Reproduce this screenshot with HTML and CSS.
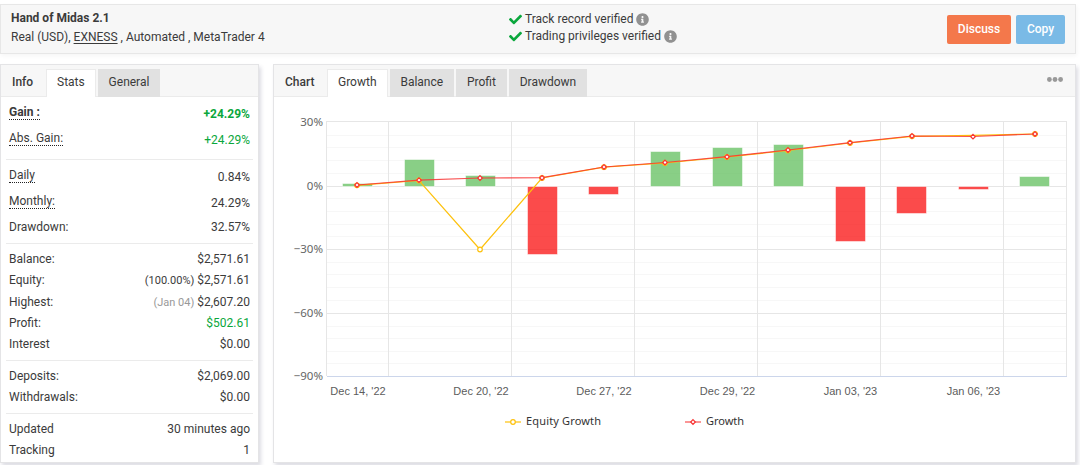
FILE: index.html
```html
<!DOCTYPE html>
<html lang="en">
<head>
<meta charset="utf-8">
<title>Hand of Midas 2.1</title>
<link rel="stylesheet" href="styles.css">
</head>
<body>
<svg class="defs" width="0" height="0">
  <symbol id="check" viewBox="0 0 512 512"><path d="M173.898 439.404l-166.4-166.4c-9.997-9.997-9.997-26.206 0-36.204l36.203-36.204c9.997-9.998 26.207-9.998 36.204 0L192 312.69 432.095 72.596c9.997-9.997 26.207-9.997 36.204 0l36.203 36.204c9.997 9.997 9.997 26.206 0 36.204l-294.4 294.401c-9.998 9.997-26.207 9.997-36.204-.001z"/></symbol>
  <symbol id="info" viewBox="0 0 512 512"><path d="M256 8C119.043 8 8 119.083 8 256c0 136.997 111.043 248 248 248s248-111.003 248-248C504 119.083 392.957 8 256 8zm0 110c23.196 0 42 18.804 42 42s-18.804 42-42 42-42-18.804-42-42 18.804-42 42-42zm56 254c0 6.627-5.373 12-12 12h-88c-6.627 0-12-5.373-12-12v-24c0-6.627 5.373-12 12-12h12v-64h-12c-6.627 0-12-5.373-12-12v-24c0-6.627 5.373-12 12-12h64c6.627 0 12 5.373 12 12v100h12c6.627 0 12 5.373 12 12v24z"/></symbol>
</svg>
<header class="account">
  <div class="account-info">
    <h1 class="account-name">Hand of Midas 2.1</h1>
    <p class="account-meta">Real (USD), <a class="broker">EXNESS</a> , Automated , MetaTrader 4</p>
  </div>
  <ul class="verified">
    <li class="verified-item"><svg class="check"><use href="#check"/></svg><span>Track record verified</span><svg class="info"><use href="#info"/></svg></li>
    <li class="verified-item"><svg class="check"><use href="#check"/></svg><span>Trading privileges verified</span><svg class="info"><use href="#info"/></svg></li>
  </ul>
  <div class="actions">
    <button class="btn btn-discuss">Discuss</button>
    <button class="btn btn-copy">Copy</button>
  </div>
</header>
<main class="columns">
  <section class="panel stats-panel">
    <nav class="panel-head">
      <h2 class="panel-title">Info</h2>
      <a class="tab tab-active">Stats</a>
      <a class="tab">General</a>
    </nav>
    <div class="stats">
      <div class="group group-gain">
        <div class="row strong"><span class="hint">Gain :</span><span class="green">+24.29%</span></div>
        <div class="row"><span class="hint">Abs. Gain:</span><span class="green">+24.29%</span></div>
      </div>
      <div class="group group-rate">
        <div class="row"><span class="hint">Daily</span><span>0.84%</span></div>
        <div class="row"><span class="hint">Monthly:</span><span>24.29%</span></div>
        <div class="row row-short"><span>Drawdown:</span><span>32.57%</span></div>
      </div>
      <div class="group">
        <div class="row"><span>Balance:</span><span>$2,571.61</span></div>
        <div class="row"><span>Equity:</span><span><small class="note">(100.00%)</small> $2,571.61</span></div>
        <div class="row"><span>Highest:</span><span><small class="note muted">(Jan 04)</small> $2,607.20</span></div>
        <div class="row"><span>Profit:</span><span class="green">$502.61</span></div>
        <div class="row"><span>Interest</span><span>$0.00</span></div>
      </div>
      <div class="group group-pair">
        <div class="row"><span>Deposits:</span><span>$2,069.00</span></div>
        <div class="row"><span>Withdrawals:</span><span>$0.00</span></div>
      </div>
      <div class="group group-pair">
        <div class="row"><span>Updated</span><span>30 minutes ago</span></div>
        <div class="row"><span>Tracking</span><span>1</span></div>
      </div>
    </div>
  </section>
  <section class="panel chart-panel">
    <nav class="panel-head">
      <h2 class="panel-title">Chart</h2>
      <a class="tab tab-active">Growth</a>
      <a class="tab">Balance</a>
      <a class="tab">Profit</a>
      <a class="tab">Drawdown</a>
      <svg class="more" viewBox="0 0 16 5"><circle cx="2.4" cy="2.5" r="2.4"/><circle cx="8" cy="2.5" r="2.4"/><circle cx="13.6" cy="2.5" r="2.4"/></svg>
    </nav>
    <svg class="chart" viewBox="274 97 801 365">
      <path class="grid-minor" d="M327 135.5H1066M327 147.5H1066M327 160.5H1066M327 173.5H1066M327 198.5H1066M327 211.5H1066M327 224.5H1066M327 236.5H1066M327 262.5H1066M327 274.5H1066M327 287.5H1066M327 300.5H1066M327 326.5H1066M327 338.5H1066M327 351.5H1066M327 363.5H1066"/>
      <path class="grid" d="M327 121.5H1066M327 186.5H1066M327 249.5H1066M327 313.5H1066M326.500 121V376M388.500 121V376M511.500 121V376M634.500 121V376M757.500 121V376M880.500 121V376M1003.500 121V376M1066.500 121V376"/>
      <path class="axis" d="M327 376.500H1067"/>
      <g class="bar-up">
        <rect x="342.500" y="183.500" width="30" height="3"/>
        <rect x="404.500" y="159.500" width="30" height="27"/>
        <rect x="465.500" y="175.500" width="30" height="11"/>
        <rect x="650.500" y="151.500" width="30" height="35"/>
        <rect x="712.500" y="147.500" width="30" height="39"/>
        <rect x="773.500" y="144.500" width="30" height="42"/>
        <rect x="1019.500" y="176.500" width="30" height="10"/>
      </g>
      <g class="bar-down">
        <rect x="527.500" y="186.500" width="30" height="68"/>
        <rect x="588.500" y="186.500" width="30" height="8"/>
        <rect x="835.500" y="186.500" width="30" height="55"/>
        <rect x="896.500" y="186.500" width="30" height="27"/>
        <rect x="958.500" y="186.500" width="30" height="3"/>
      </g>
      <polyline class="line line-equity" points="357,185.300 419,180.500 480,249.500 542,178 604,167.200 665,163 727,157 788,150.500 850,143 912,136.300 973,135.300 1035,134"/>
      <g class="dot-equity">
        <circle cx="357" cy="185.300" r="2.3"/><circle cx="419" cy="180.500" r="2.3"/><circle cx="480" cy="249.500" r="2.3"/><circle cx="542" cy="178" r="2.3"/><circle cx="604" cy="167.200" r="2.3"/><circle cx="665" cy="163" r="2.3"/><circle cx="727" cy="157" r="2.3"/><circle cx="788" cy="150.500" r="2.3"/><circle cx="850" cy="143" r="2.3"/><circle cx="912" cy="136.300" r="2.3"/><circle cx="1035" cy="134" r="2.3"/>
      </g>
      <polyline class="line line-growth" points="357,185 419,180.200 480,178 542,177.700 604,167 665,162.500 727,156.700 788,150 850,142.700 912,136 973,136.500 1035,134"/>
      <g class="dot-growth">
        <path d="M357 182.700l2.300 2.300-2.300 2.300-2.300-2.300z"/><path d="M419 177.900l2.300 2.300-2.300 2.300-2.300-2.300z"/><path d="M480 175.700l2.300 2.300-2.300 2.300-2.300-2.300z"/><path d="M542 175.500l2.300 2.300-2.300 2.300-2.300-2.300z"/><path d="M604 164.700l2.300 2.300-2.300 2.300-2.300-2.300z"/><path d="M665 160.200l2.300 2.300-2.300 2.300-2.300-2.300z"/><path d="M727 154.500l2.300 2.300-2.300 2.300-2.300-2.300z"/><path d="M788 147.700l2.300 2.300-2.300 2.300-2.300-2.300z"/><path d="M850 140.400l2.300 2.300-2.300 2.300-2.300-2.300z"/><path d="M912 133.700l2.300 2.300-2.300 2.300-2.300-2.300z"/><path d="M973 134.400l2.300 2.300-2.300 2.300-2.300-2.300z"/><path d="M1035 131.700l2.300 2.300-2.300 2.300-2.300-2.300z"/>
      </g>
      <g class="y-label">
        <text x="323" y="126">30%</text><text x="323" y="190">0%</text><text x="323" y="253">−30%</text><text x="323" y="317">−60%</text><text x="323" y="380">−90%</text>
      </g>
      <g class="x-label">
        <text x="358" y="395">Dec 14, '22</text><text x="481" y="395">Dec 20, '22</text><text x="604" y="395">Dec 27, '22</text><text x="727.500" y="395">Dec 29, '22</text><text x="850.500" y="395">Jan 03, '23</text><text x="973.500" y="395">Jan 06, '23</text>
      </g>
      <path class="line line-equity" d="M505 422H521"/>
      <g class="dot-equity"><circle cx="513" cy="422" r="2.3"/></g>
      <path class="line line-growth" d="M685 422H701"/>
      <g class="dot-growth"><path d="M693 419.700l2.300 2.300-2.300 2.300-2.300-2.300z"/></g>
      <g class="legend"><text x="526" y="425" textLength="75">Equity Growth</text><text x="706" y="425" textLength="38">Growth</text></g>
    </svg>
  </section>
</main>
</body>
</html>
```
FILE: styles.css
```css
* { box-sizing: border-box; }
body {
  margin: 0;
  padding-top: 4px;
  height: 465px;
  overflow: hidden;
  background: #fff;
  color: #3b3b3b;
  font: 12px/17px Roboto, "Liberation Sans", sans-serif;
}
h1, h2, p, ul { margin: 0; padding: 0; font-size: 12px; }
.defs { display: block; height: 0; }

.account {
  display: grid;
  grid-template-columns: 498px 1fr auto;
  width: 1076px;
  height: 50px;
  border: 1px solid #e7e7e7;
  background: #f7f7f7;
  padding: 0 10px;
  box-shadow: 1px 2px 4px rgba(0, 0, 0, .04);
}
.account-info { padding-top: 4px; }
.account-name { line-height: 19px; font-weight: 700; }
.account-meta { line-height: 18px; }
.broker { text-decoration: underline; text-underline-offset: 2px; }
.verified { list-style: none; padding-top: 6px; }
.verified-item { display: flex; align-items: center; height: 17px; }
.check { width: 13px; height: 13px; margin: 0 3px 1px 0; fill: #0aa73c; }
.info { width: 13px; height: 13px; margin: 0 0 1px 3px; fill: #919191; }
.actions { display: flex; gap: 5px; padding-top: 10px; }
.btn {
  height: 29px;
  padding: 0;
  border: 0;
  border-radius: 2px;
  color: #fff;
  font: 500 12px/27px Roboto, sans-serif;
}
.btn-discuss { width: 64px; padding-bottom: 1px; background: #f4784b; }
.btn-copy { width: 49px; padding-bottom: 1px; background: #7abae6; }

.columns { display: grid; grid-template-columns: 259px 803px; gap: 14px; margin-top: 10px; }
.panel {
  height: 399px;
  border: 1px solid #e4e4e6;
  background: #fff;
  box-shadow: 2px 3px 4px rgba(40, 40, 80, .16);
}
.panel-head {
  display: flex;
  align-items: flex-end;
  gap: 2px;
  height: 32px;
  border-bottom: 1px solid #ebebeb;
  background: #f7f7f7;
}
.panel-title { width: 43px; padding-left: 11px; line-height: 28px; font-weight: 500; }
.chart-panel .panel-title { width: 51px; }
.tab { height: 28px; margin-bottom: -1px; padding: 0 10.900px; line-height: 27px; background: #e1e1e1; }
.tab-active { border: 1px solid #ebebeb; border-bottom: 0; background: #fff; line-height: 25px; padding: 0 10px; }
.more { width: 16px; height: 5px; margin: 0 12px 14px auto; fill: #999; }

.group { margin: 0 5px; padding: 5px 3px; }
.group + .group { border-top: 1px solid #ebebeb; }
.row { display: flex; align-items: center; justify-content: space-between; height: 21.300px; }
.group-gain { padding-top: 4px; padding-bottom: 6px; }
.group-gain .row, .group-rate .row { height: 26px; }
.group-rate { padding: 4px 3px; }
.group-rate .row-short { height: 23px; }
.group-pair { padding: 4.500px 3px 5.500px; }
.group-pair .row { height: 21px; }
.hint { border-bottom: 1px dotted #222; line-height: 14px; margin-bottom: 3px; }
.strong { font-weight: 700; }
.green { color: #0aa73c; }
.note { font-size: 11px; }
.muted { color: #999; }

.chart { display: block; width: 801px; height: 365px; }
.grid, .grid-minor, .axis { fill: none; stroke: #e6e6e6; }
.grid-minor { stroke: #f7f7f7; }
.axis { stroke: #ccd6eb; }
.bar-up { fill: #5cbc58; fill-opacity: .72; stroke: #fff; stroke-opacity: .5; }
.bar-down { fill: #fa0f0f; fill-opacity: .75; stroke: #fff; stroke-opacity: .5; }
.line { fill: none; stroke-width: 1.200; }
.line-equity { stroke: #fdc10d; }
.line-growth { stroke: #f83232; stroke-opacity: .85; }
.dot-equity { fill: #fff; stroke: #fdc10d; stroke-width: 1.200; }
.dot-growth { fill: #fff; stroke: #f83232; stroke-width: 1.200; }
.y-label { font: 11.500px "Noto Sans", sans-serif; fill: #666; text-anchor: end; }
.x-label { font: 11px "Liberation Sans", sans-serif; fill: #5c5c5c; text-anchor: middle; }
.legend { font: 11px "Noto Sans", sans-serif; fill: #333; }
```
